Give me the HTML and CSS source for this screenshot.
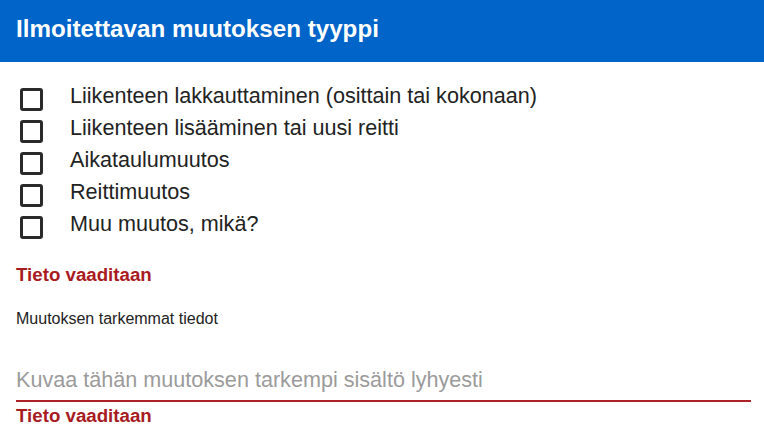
FILE: index.html
```html
<!DOCTYPE html>
<html>
	<head>
		<meta charset="UTF-8">
		<title>Ilmoitettavan muutoksen tyyppi</title>
		<link rel="stylesheet" href="styles.css">
	</head>
	<body>
		<div class="header">Ilmoitettavan muutoksen tyyppi</div>
		<div class="form">
			<div class="options">
				<label class="option"><input type="checkbox" class="box"><span>Liikenteen lakkauttaminen (osittain tai kokonaan)</span></label>
				<label class="option"><input type="checkbox" class="box"><span>Liikenteen lisääminen tai uusi reitti</span></label>
				<label class="option"><input type="checkbox" class="box"><span>Aikataulumuutos</span></label>
				<label class="option"><input type="checkbox" class="box"><span>Reittimuutos</span></label>
				<label class="option"><input type="checkbox" class="box"><span>Muu muutos, mikä?</span></label>
			</div>
			<div class="error first">Tieto vaaditaan</div>
			<div class="label">Muutoksen tarkemmat tiedot</div>
			<input class="details" type="text" placeholder="Kuvaa tähän muutoksen tarkempi sisältö lyhyesti">
			<div class="error">Tieto vaaditaan</div>
		</div>
	</body>
</html>
```

FILE: styles.css
```css
body {
	margin: 0;
	padding: 0;
	font-family: "Liberation Sans", Arial, sans-serif;
	color: #222;
	background: #fff;
}
.header {
	background-color: #0064c9;
	color: #fff;
	font-weight: bold;
	font-size: 24.2px;
	line-height: 28px;
	padding: 15px 16px 19px;
}
.form {
	padding: 0 13px 0 16px;
}
.options {
	margin-top: 18px;
}
.option {
	display: flex;
	align-items: flex-start;
	height: 32px;
	font-size: 21.6px;
	line-height: 32px;
	color: #222;
}
.box {
	appearance: none;
	-webkit-appearance: none;
	box-sizing: border-box;
	width: 23px;
	height: 23px;
	margin: 8px 27px 0 4px;
	border: 3px solid #2a2a2a;
	border-radius: 3px;
	background: #fff;
	flex: none;
}
.error {
	color: #a81b1f;
	font-weight: bold;
	font-size: 18.7px;
	line-height: 22px;
	margin-top: 3px;
}
.error.first {
	margin-top: 24px;
}
.label {
	font-size: 16px;
	line-height: 20px;
	margin-top: 23px;
	margin-bottom: 29px;
}
.details {
	display: block;
	width: 100%;
	box-sizing: border-box;
	height: 44px;
	font-family: inherit;
	font-size: 21.6px;
	line-height: 28px;
	padding: 8px 0 6px;
	margin: 0;
	border: 0;
	border-bottom: 2px solid #ad2127;
	outline: none;
	color: #222;
	background: transparent;
}
.details::placeholder {
	color: #9b9b9b;
}
```
